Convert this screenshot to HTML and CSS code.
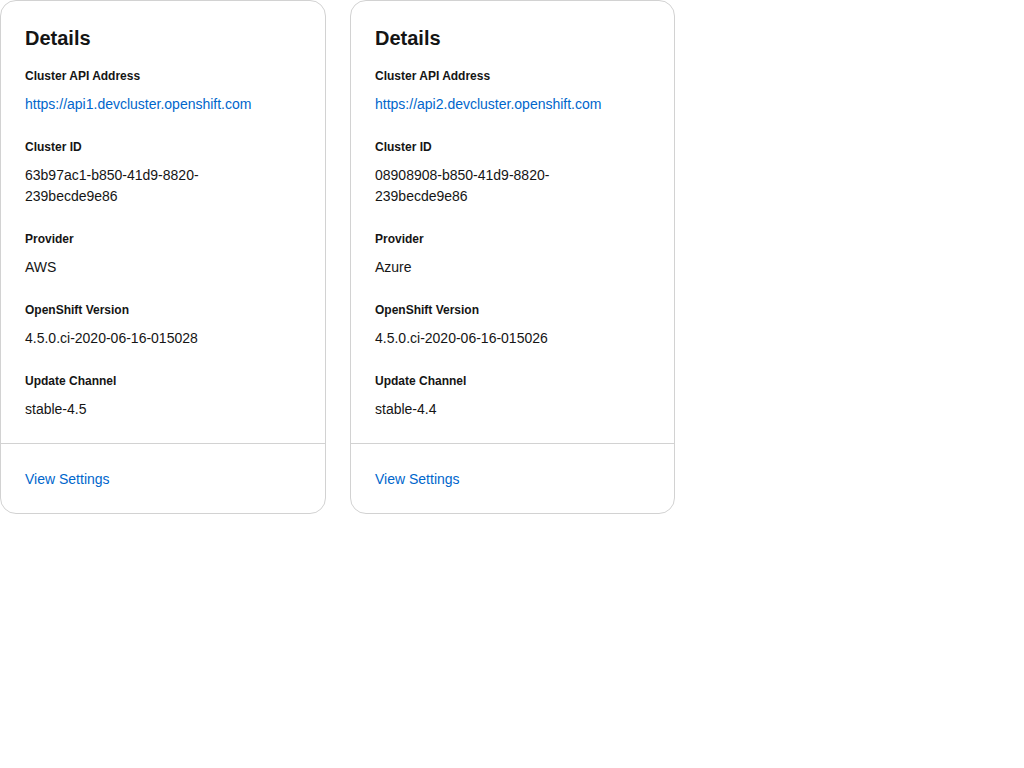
FILE: index.html
```html
<!DOCTYPE html>
<html lang="en">
<head>
<meta charset="utf-8">
<title>Cluster Details</title>
<link rel="stylesheet" href="styles.css">
</head>
<body>
<div class="cards">
  <section class="card">
    <div class="card-body">
      <h2 class="card-title">Details</h2>
      <dl class="details">
        <div class="group">
          <dt class="label">Cluster API Address</dt>
          <dd class="value"><a class="link" href="#">https://api1.devcluster.openshift.com</a></dd>
        </div>
        <div class="group">
          <dt class="label">Cluster ID</dt>
          <dd class="value value-id">63b97ac1-b850-41d9-8820-239becde9e86</dd>
        </div>
        <div class="group">
          <dt class="label">Provider</dt>
          <dd class="value">AWS</dd>
        </div>
        <div class="group">
          <dt class="label">OpenShift Version</dt>
          <dd class="value">4.5.0.ci-2020-06-16-015028</dd>
        </div>
        <div class="group">
          <dt class="label">Update Channel</dt>
          <dd class="value">stable-4.5</dd>
        </div>
      </dl>
    </div>
    <div class="card-footer">
      <a class="link" href="#">View Settings</a>
    </div>
  </section>
  <section class="card">
    <div class="card-body">
      <h2 class="card-title">Details</h2>
      <dl class="details">
        <div class="group">
          <dt class="label">Cluster API Address</dt>
          <dd class="value"><a class="link" href="#">https://api2.devcluster.openshift.com</a></dd>
        </div>
        <div class="group">
          <dt class="label">Cluster ID</dt>
          <dd class="value value-id">08908908-b850-41d9-8820-239becde9e86</dd>
        </div>
        <div class="group">
          <dt class="label">Provider</dt>
          <dd class="value">Azure</dd>
        </div>
        <div class="group">
          <dt class="label">OpenShift Version</dt>
          <dd class="value">4.5.0.ci-2020-06-16-015026</dd>
        </div>
        <div class="group">
          <dt class="label">Update Channel</dt>
          <dd class="value">stable-4.4</dd>
        </div>
      </dl>
    </div>
    <div class="card-footer">
      <a class="link" href="#">View Settings</a>
    </div>
  </section>
</div>
</body>
</html>
```

FILE: styles.css
```css
* {
  box-sizing: border-box;
}

body {
  margin: 0;
  background: #ffffff;
  color: #151515;
  font-family: "Liberation Sans", Arial, sans-serif;
  font-size: 14px;
  line-height: 21px;
}

.cards {
  display: grid;
  grid-template-columns: 326px 325px;
  column-gap: 24px;
  align-items: start;
}

.card {
  border: 1px solid #d2d2d2;
  border-radius: 16px;
  background: #ffffff;
  display: flex;
  flex-direction: column;
}

.card-body {
  padding: 23px 24px 23px 24px;
}

.card-title {
  margin: 0 0 15px 0;
  font-size: 20px;
  line-height: 28px;
  font-weight: 700;
  color: #151515;
}

.details {
  margin: 0;
  display: flex;
  flex-direction: column;
  gap: 23px;
}

.group {
  display: flex;
  flex-direction: column;
  gap: 9px;
}

.label {
  margin: 0;
  font-size: 12px;
  line-height: 18px;
  font-weight: 700;
  color: #151515;
}

.value {
  margin: 0;
  font-size: 14px;
  line-height: 21px;
  color: #151515;
}

.value-id {
  max-width: 200px;
}

.link {
  color: #0066cc;
  text-decoration: none;
}

.card-footer {
  border-top: 1px solid #d2d2d2;
  padding: 25px 24px 23px 24px;
}
```
